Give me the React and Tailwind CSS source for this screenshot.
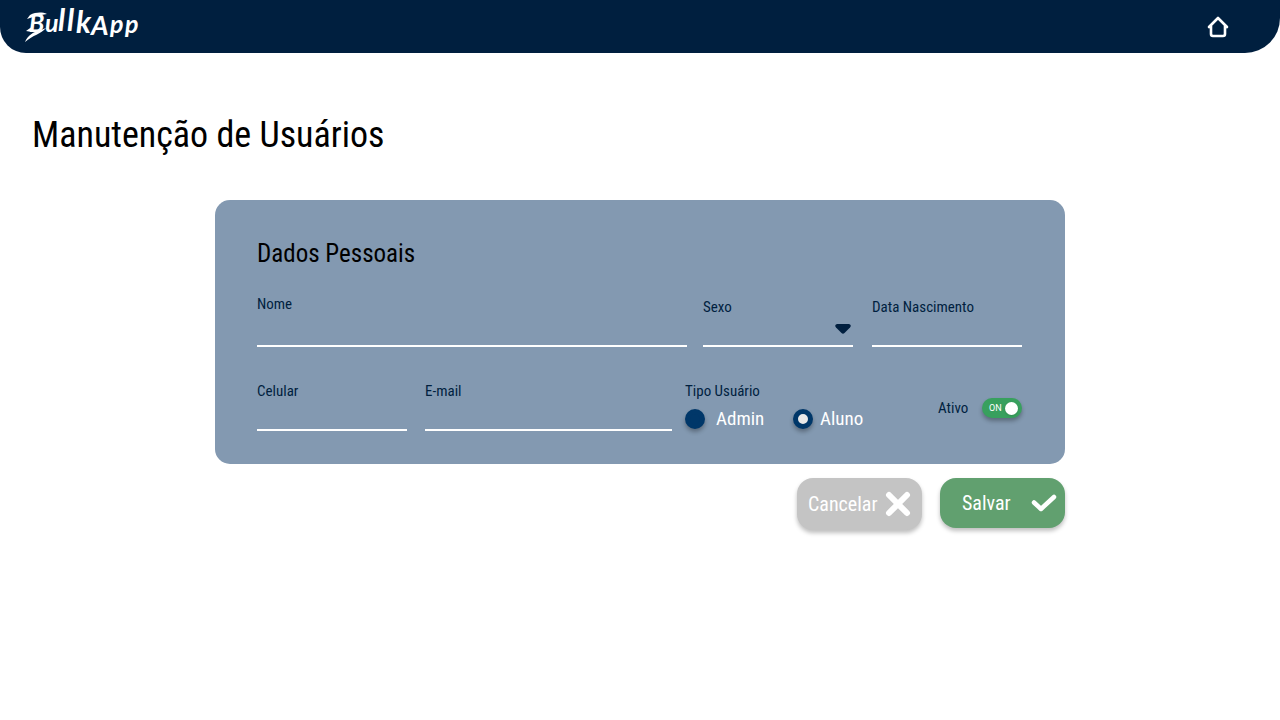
import { useState } from "react";

const labelClass = "block text-[15px] leading-5 text-[#001f3f]";
const fieldClass =
  "block w-full border-b-2 border-white bg-transparent px-1 text-base text-[#001f3f] outline-none";

function TextField({ id, label, type = "text", className, height = "h-[30px]" }) {
  return (
    <div className={className}>
      <label htmlFor={id} className={labelClass}>
        {label}
      </label>
      <input id={id} name={id} type={type} className={`${fieldClass} ${height}`} />
    </div>
  );
}

function UserType({ value, checked, onChange, className }) {
  return (
    <label className={`flex items-center text-[19px] leading-6 text-white ${className}`}>
      <input
        type="radio"
        name="tipo"
        value={value}
        checked={checked}
        onChange={() => onChange(value)}
        className="size-5 appearance-none rounded-full border-5 border-[#003769] bg-[#003769] shadow-[0_3px_4px_rgba(0,0,0,0.3)] checked:bg-[#e8e8e8]"
      />
      {value}
    </label>
  );
}

function Logo() {
  return (
    <a href="#inicio" aria-label="BullkApp" className="block text-white">
      <svg
        viewBox="0 0 120 52"
        className="h-13 w-[120px] overflow-visible"
        fill="currentColor"
        fontFamily="Lato, sans-serif"
        fontStyle="italic"
        fontWeight="700"
      >
        <text fontSize="25">
          <tspan x="5" y="31">B</tspan>
          <tspan x="21" y="31">u</tspan>
          <tspan x="34" y="30" fontSize="30">l</tspan>
          <tspan x="43" y="30" fontSize="30">l</tspan>
          <tspan x="52" y="32" fontSize="30">k</tspan>
          <tspan x="67" y="34" fontSize="27">A</tspan>
          <tspan x="86" y="32">p</tspan>
          <tspan x="101" y="32">p</tspan>
        </text>
        <path d="M1 41 C4 34 9 31 17 29 L22 27 C17 33 9 34 1 41Z M3 18 L6 14 C12 11 18 11 23 13 L12 15Z M2 30 L9 25 L8 31Z" />
      </svg>
    </a>
  );
}

export default function App() {
  const [tipo, setTipo] = useState("Aluno");
  const [ativo, setAtivo] = useState(true);

  return (
    <div className="min-h-screen bg-white font-['Roboto_Condensed',Roboto,sans-serif] text-black">
      <header className="flex h-[53px] items-center justify-between rounded-bl-[26px] rounded-br-[35px] bg-[#001f3f] pr-[50px] pl-6">
        <Logo />
        <a href="#inicio" aria-label="Início" className="text-white">
          <svg
            viewBox="0 0 24 24"
            className="size-6"
            fill="none"
            stroke="currentColor"
            strokeWidth="2.6"
            strokeLinecap="round"
            strokeLinejoin="round"
          >
            <path d="M3 12 L12 3 L21 12 M5 11 V19 Q5 21 7 21 H17 Q19 21 19 19 V11" />
          </svg>
        </a>
      </header>

      <main className="px-8 pt-[58px] pb-8">
        <h1 className="text-4xl leading-[48px]">Manutenção de Usuários</h1>

        <form className="mx-auto mt-[41px] max-w-[850px]" onSubmit={(e) => e.preventDefault()}>
          <section className="rounded-[15px] bg-[#8399b1] pt-9 pr-[43px] pb-[33px] pl-[42px]">
            <h2 className="text-[25px] leading-9">Dados Pessoais</h2>

            <div className="mt-[22px] flex items-end">
              <TextField id="nome" label="Nome" className="mr-4 flex-1" height="h-[33px]" />
              <div className="mr-[19px] w-[150px]">
                <label htmlFor="sexo" className={labelClass}>
                  Sexo
                </label>
                <div className="relative">
                  <select id="sexo" defaultValue="" className={`${fieldClass} h-[30px] appearance-none`}>
                    <option value=""></option>
                    <option value="f">Feminino</option>
                    <option value="m">Masculino</option>
                  </select>
                  <svg
                    viewBox="0 0 16 10"
                    className="pointer-events-none absolute top-[7px] right-0.5 h-2.5 w-4 text-[#001f3f]"
                    fill="currentColor"
                  >
                    <path d="M2 0 H14 Q17 1 15 3.5 L9.5 9 Q8 10.4 6.5 9 L1 3.5 Q-1 1 2 0Z" />
                  </svg>
                </div>
              </div>
              <TextField id="nascimento" label="Data Nascimento" className="w-[150px]" />
            </div>

            <div className="mt-[34px] flex items-start">
              <TextField id="celular" label="Celular" type="tel" className="mr-[18px] w-[150px]" />
              <TextField id="email" label="E-mail" type="email" className="mr-[13px] flex-1" />
              <fieldset className="w-[253px]">
                <legend className={labelClass}>Tipo Usuário</legend>
                <div className="mt-1.5 flex items-center">
                  <UserType
                    value="Admin"
                    checked={tipo === "Admin"}
                    onChange={setTipo}
                    className="w-[108px] gap-[11px]"
                  />
                  <UserType
                    value="Aluno"
                    checked={tipo === "Aluno"}
                    onChange={setTipo}
                    className="gap-[7px]"
                  />
                </div>
              </fieldset>
              <label className="mt-[17px] flex w-[84px] items-center justify-between text-[15px] leading-5 text-[#001f3f]">
                Ativo
                <span className="relative flex h-5 w-10 items-center">
                  <input
                    type="checkbox"
                    role="switch"
                    checked={ativo}
                    onChange={(e) => setAtivo(e.target.checked)}
                    className="peer h-5 w-10 appearance-none rounded-full bg-gray-500 shadow-[0_3px_4px_rgba(0,0,0,0.3)] checked:bg-[#38a05e]"
                  />
                  <span
                    className={`pointer-events-none absolute font-[Roboto,sans-serif] text-[9px] leading-5 text-white ${ativo ? "left-[7px]" : "right-[5px]"}`}
                  >
                    {ativo ? "ON" : "OFF"}
                  </span>
                  <span className="pointer-events-none absolute left-1 size-[13px] rounded-full bg-white shadow-sm peer-checked:left-[23px]" />
                </span>
              </label>
            </div>
          </section>

          <div className="mt-3.5 flex items-start justify-end gap-[18px]">
            <button
              type="button"
              className="flex h-13 w-[125px] items-center justify-between rounded-2xl bg-[#c4c4c4] px-[11px] text-xl leading-7 text-white shadow-[0_3px_4px_rgba(0,0,0,0.25)]"
            >
              Cancelar
              <svg
                viewBox="0 0 26 26"
                className="size-[26px] shrink-0"
                fill="none"
                stroke="currentColor"
                strokeWidth="6"
                strokeLinecap="round"
              >
                <path d="M4 4 L22 22 M22 4 L4 22" />
              </svg>
            </button>
            <button
              type="submit"
              className="flex h-[50px] w-[125px] items-center justify-between rounded-2xl bg-[#61a06f] pr-2 pl-[22px] text-xl leading-7 text-white shadow-[0_3px_4px_rgba(0,0,0,0.25)]"
            >
              Salvar
              <svg
                viewBox="0 0 26 20"
                className="h-5 w-[26px] shrink-0"
                fill="none"
                stroke="currentColor"
                strokeWidth="4.5"
                strokeLinecap="round"
                strokeLinejoin="round"
              >
                <path d="M3 9.5 L10 16 L23 4" />
              </svg>
            </button>
          </div>
        </form>
      </main>
    </div>
  );
}
